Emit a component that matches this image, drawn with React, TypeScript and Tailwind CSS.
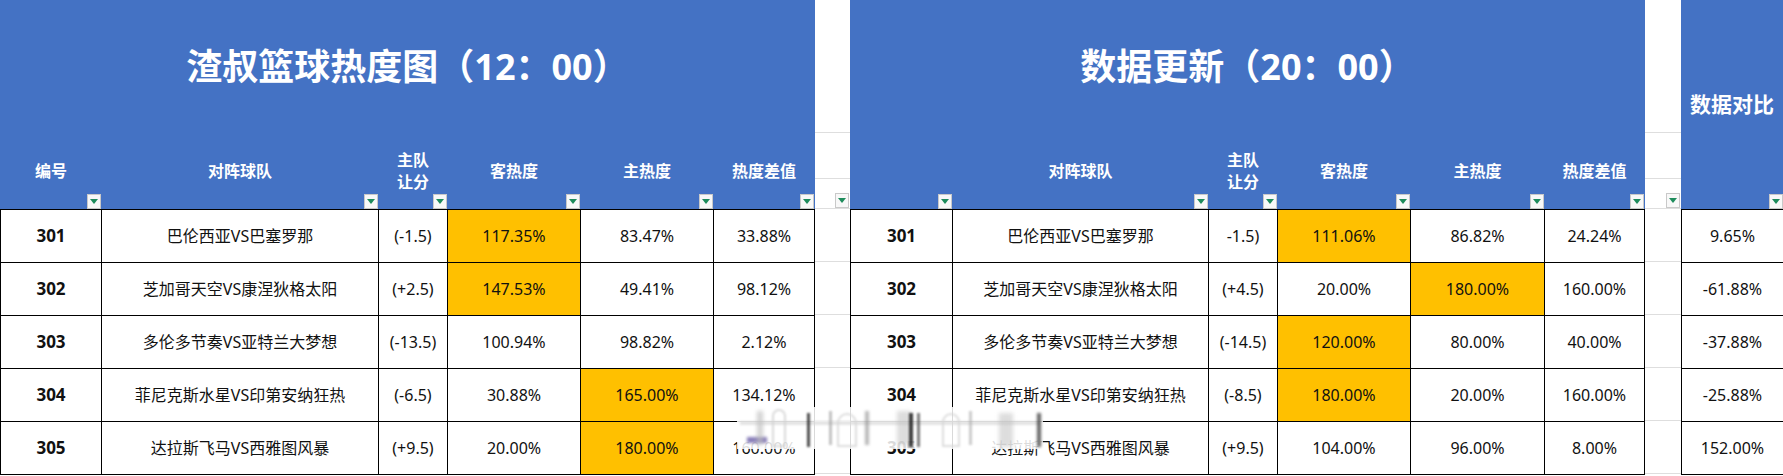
import React from "react";

type Row = { id: string; team: string; spread: string; away: string; home: string; diff: string; y: number[] };

const BLUE = "bg-[#4472c4]";

function Drop() {
  return (
    <div className="absolute right-0 bottom-0 w-[14px] h-[15px] bg-[#f8f8f8] border border-[#c9c9c9] flex items-center justify-center">
      <div className="w-0 h-0 border-l-[4px] border-r-[4px] border-t-[5px] border-l-transparent border-r-transparent border-t-[#1e8c5c]" />
    </div>
  );
}

function Table({ title, widths, labels, rows }: { title: string; widths: number[]; labels: string[][]; rows: Row[] }) {
  return (
    <div className="flex flex-col shrink-0">
      <div className={`${BLUE} h-[133px] flex items-center justify-center text-white font-bold text-[36px] leading-none`}>
        {title}
      </div>
      <div className={`${BLUE} h-[76px] flex pl-px`}>
        {widths.map((w, i) => (
          <div key={i} className="relative h-full shrink-0" style={{ width: w }}>
            <div className="absolute inset-y-0 left-0 right-px flex flex-col items-center justify-center text-white font-bold text-[16px] leading-[22px]">
              {labels[i].map((l, j) => (
                <span key={j}>{l}</span>
              ))}
            </div>
            <div className="absolute inset-y-0 left-0 right-px">
              <Drop />
            </div>
          </div>
        ))}
      </div>
      <div className="border-t border-l border-black flex flex-col">
        {rows.map((r, ri) => {
          const cells = [r.id, r.team, r.spread, r.away, r.home, r.diff];
          return (
            <div key={ri} className="flex h-[53px] border-b border-black">
              {cells.map((c, ci) => (
                <div
                  key={ci}
                  className={`shrink-0 h-full border-r border-black flex items-center justify-center whitespace-nowrap text-[#111] ${
                    ci === 0 ? "font-bold text-[17px]" : "text-[16px]"
                  } ${r.y.includes(ci) ? "bg-[#ffc000]" : "bg-white"}`}
                  style={{ width: widths[ci] }}
                >
                  {c}
                </div>
              ))}
            </div>
          );
        })}
      </div>
    </div>
  );
}

function Gap({ w }: { w: number }) {
  return (
    <div className="flex flex-col shrink-0 bg-white" style={{ width: w }}>
      <div className="h-[133px] border-b border-[#dedede]" />
      <div className="h-[46px] border-b border-[#dedede]" />
      <div className="relative h-[30px] border-b border-[#dedede]">
        <div className="absolute inset-y-0 left-0 right-px">
          <Drop />
        </div>
      </div>
      {[0, 1, 2, 3, 4].map((i) => (
        <div key={i} className="h-[53px] border-b border-[#dedede]" />
      ))}
    </div>
  );
}

const t1: Row[] = [
  { id: "301", team: "巴伦西亚VS巴塞罗那", spread: "(-1.5)", away: "117.35%", home: "83.47%", diff: "33.88%", y: [3] },
  { id: "302", team: "芝加哥天空VS康涅狄格太阳", spread: "(+2.5)", away: "147.53%", home: "49.41%", diff: "98.12%", y: [3] },
  { id: "303", team: "多伦多节奏VS亚特兰大梦想", spread: "(-13.5)", away: "100.94%", home: "98.82%", diff: "2.12%", y: [] },
  { id: "304", team: "菲尼克斯水星VS印第安纳狂热", spread: "(-6.5)", away: "30.88%", home: "165.00%", diff: "134.12%", y: [4] },
  { id: "305", team: "达拉斯飞马VS西雅图风暴", spread: "(+9.5)", away: "20.00%", home: "180.00%", diff: "160.00%", y: [4] },
];

const t2: Row[] = [
  { id: "301", team: "巴伦西亚VS巴塞罗那", spread: "-1.5)", away: "111.06%", home: "86.82%", diff: "24.24%", y: [3] },
  { id: "302", team: "芝加哥天空VS康涅狄格太阳", spread: "(+4.5)", away: "20.00%", home: "180.00%", diff: "160.00%", y: [4] },
  { id: "303", team: "多伦多节奏VS亚特兰大梦想", spread: "(-14.5)", away: "120.00%", home: "80.00%", diff: "40.00%", y: [3] },
  { id: "304", team: "菲尼克斯水星VS印第安纳狂热", spread: "(-8.5)", away: "180.00%", home: "20.00%", diff: "160.00%", y: [3] },
  { id: "305", team: "达拉斯飞马VS西雅图风暴", spread: "(+9.5)", away: "104.00%", home: "96.00%", diff: "8.00%", y: [] },
];

const t3 = ["9.65%", "-61.88%", "-37.88%", "-25.88%", "152.00%"];

export default function App() {
  return (
    <div className="relative w-[1783px] h-[476px] overflow-hidden bg-white font-['Noto_Sans','Noto_Sans_CJK_SC',sans-serif]">
      <div className="flex">
        <Table
          title="渣叔篮球热度图（12：00）"
          widths={[101, 277, 69, 133, 133, 101]}
          labels={[["编号"], ["对阵球队"], ["主队", "让分"], ["客热度"], ["主热度"], ["热度差值"]]}
          rows={t1}
        />
        <Gap w={35} />
        <Table
          title="数据更新（20：00）"
          widths={[102, 256, 69, 133, 134, 100]}
          labels={[[""], ["对阵球队"], ["主队", "让分"], ["客热度"], ["主热度"], ["热度差值"]]}
          rows={t2}
        />
        <Gap w={36} />
        <div className="flex flex-col shrink-0 w-[103px]">
          <div className={`${BLUE} relative h-[209px] flex items-center justify-center text-white font-bold text-[21px]`}>
            <span className="pr-px">数据对比</span>
            <div className="absolute inset-y-0 left-0 right-px">
              <Drop />
            </div>
          </div>
          <div className="border-t border-l border-black flex flex-col">
            {t3.map((v, i) => (
              <div key={i} className="h-[53px] w-[102px] border-b border-r border-black flex items-center justify-center text-[16px] text-[#111]">
                {v}
              </div>
            ))}
          </div>
        </div>
      </div>
      {/* blurred watermark overlay */}
      <div className="absolute left-[737px] top-[407px] w-[306px] h-[42px] bg-white/85 blur-[0.5px]">
        <div className="absolute left-[3px] top-[14px] w-[300px] h-[4px] bg-[#d8d8d8]/70 blur-[1px]" />
        <div className="absolute left-[10px] top-[30px] w-[20px] h-[6px] bg-[#3a2a8a]/60 blur-[1.5px]" />
        <div className="absolute left-[20px] top-[4px] w-[6px] h-[34px] bg-[#bdbdbd]/70 blur-[2px]" />
        <div className="absolute left-[35px] top-[2px] w-[14px] h-[38px] rounded-t-full border-2 border-[#d0d0d0]/80 blur-[1px]" />
        <div className="absolute left-[70px] top-[6px] w-[3px] h-[34px] bg-[#222]/80 blur-[1px]" />
        <div className="absolute left-[92px] top-[4px] w-[3px] h-[34px] bg-[#999]/60 blur-[1px]" />
        <div className="absolute left-[100px] top-[6px] w-[20px] h-[34px] rounded-t-full border-2 border-[#d5d5d5]/80 blur-[1px]" />
        <div className="absolute left-[128px] top-[4px] w-[4px] h-[34px] bg-[#888]/60 blur-[1.5px]" />
        <div className="absolute left-[160px] top-[4px] w-[14px] h-[34px] bg-[#bbb]/50 blur-[2px]" />
        <div className="absolute left-[172px] top-[6px] w-[4px] h-[34px] bg-[#111]/80 blur-[1px]" />
        <div className="absolute left-[180px] top-[6px] w-[3px] h-[34px] bg-[#444]/70 blur-[1px]" />
        <div className="absolute left-[205px] top-[6px] w-[18px] h-[34px] rounded-t-full border-2 border-[#d5d5d5]/80 blur-[1px]" />
        <div className="absolute left-[232px] top-[4px] w-[3px] h-[34px] bg-[#aaa]/60 blur-[1px]" />
        <div className="absolute left-[262px] top-[6px] w-[14px] h-[34px] bg-[#bbb]/50 blur-[2px]" />
        <div className="absolute left-[300px] top-[6px] w-[4px] h-[34px] bg-[#222]/70 blur-[1.5px]" />
      </div>
    </div>
  );
}
